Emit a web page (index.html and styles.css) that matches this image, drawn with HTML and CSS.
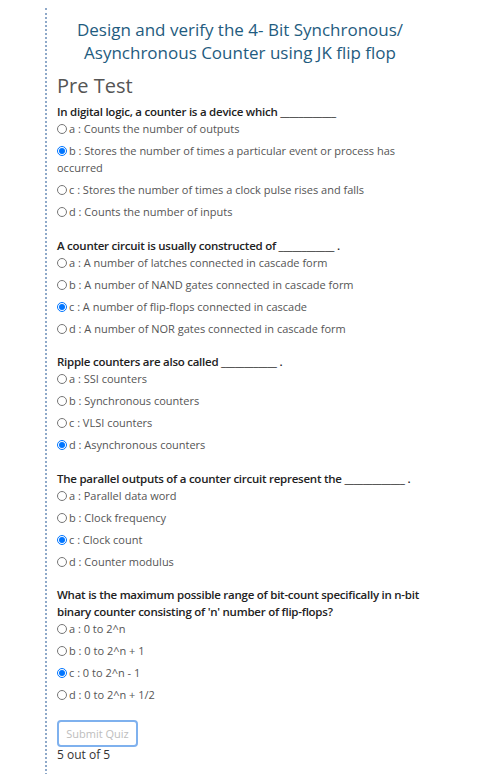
FILE: index.html
```html
<!DOCTYPE html>
<html>
<head>
<meta charset="utf-8">
<link rel="stylesheet" href="styles.css">
</head>
<body>
<div class="page">
  <h1 class="title">Design and verify the 4- Bit Synchronous/<br>Asynchronous Counter using JK flip flop</h1>
  <h2 class="sub">Pre Test</h2>

  <div class="q">
    <div class="qt">In digital logic, a counter is a device which ____________</div>
    <label class="opt"><input type="radio" name="q1">a : Counts the number of outputs</label>
    <label class="opt"><input type="radio" name="q1" checked>b : Stores the number of times a particular event or process has occurred</label>
    <label class="opt"><input type="radio" name="q1">c : Stores the number of times a clock pulse rises and falls</label>
    <label class="opt"><input type="radio" name="q1">d : Counts the number of inputs</label>
  </div>

  <div class="q">
    <div class="qt">A counter circuit is usually constructed of ____________ .</div>
    <label class="opt"><input type="radio" name="q2">a : A number of latches connected in cascade form</label>
    <label class="opt"><input type="radio" name="q2">b : A number of NAND gates connected in cascade form</label>
    <label class="opt"><input type="radio" name="q2" checked>c : A number of flip-flops connected in cascade</label>
    <label class="opt"><input type="radio" name="q2">d : A number of NOR gates connected in cascade form</label>
  </div>

  <div class="q">
    <div class="qt">Ripple counters are also called ____________ .</div>
    <label class="opt"><input type="radio" name="q3">a : SSI counters</label>
    <label class="opt"><input type="radio" name="q3">b : Synchronous counters</label>
    <label class="opt"><input type="radio" name="q3">c : VLSI counters</label>
    <label class="opt"><input type="radio" name="q3" checked>d : Asynchronous counters</label>
  </div>

  <div class="q">
    <div class="qt">The parallel outputs of a counter circuit represent the _____________ .</div>
    <label class="opt"><input type="radio" name="q4">a : Parallel data word</label>
    <label class="opt"><input type="radio" name="q4">b : Clock frequency</label>
    <label class="opt"><input type="radio" name="q4" checked>c : Clock count</label>
    <label class="opt"><input type="radio" name="q4">d : Counter modulus</label>
  </div>

  <div class="q">
    <div class="qt">What is the maximum possible range of bit-count specifically in n-bit binary counter consisting of 'n' number of flip-flops?</div>
    <label class="opt"><input type="radio" name="q5">a : 0 to 2^n</label>
    <label class="opt"><input type="radio" name="q5">b : 0 to 2^n + 1</label>
    <label class="opt"><input type="radio" name="q5" checked>c : 0 to 2^n - 1</label>
    <label class="opt"><input type="radio" name="q5">d : 0 to 2^n + 1/2</label>
  </div>

  <button class="submit" type="button">Submit Quiz</button>
  <div class="score">5 out of 5</div>
</div>
</body>
</html>
```
FILE: styles.css
```css
html, body {
  margin: 0;
  padding: 0;
  background: #fff;
}
body {
  font-family: "Open Sans", "Lato", sans-serif;
  padding: 8px 0 0 45px;
}
.page {
  width: 390px;
  border-left: 2px dotted #8fa9c9;
  padding: 8px 0 12px 10px;
  box-sizing: border-box;
  min-height: 766px;
}
.title {
  margin: 2px 0 0 -12px;
  text-align: center;
  font-size: 17px;
  font-weight: 500;
  line-height: 23px;
  color: #1f5c80;
}
.sub {
  margin: 9px 0 4px 0;
  font-size: 20px;
  font-weight: 400;
  line-height: 26px;
  color: #555;
}
.q {
  margin-bottom: 16.5px;
}
.qt {
  font-size: 11.5px;
  font-weight: 600;
  line-height: 17px;
  color: #222;
  letter-spacing: -0.25px;
}
.opt {
  display: block;
  font-size: 11px;
  line-height: 17px;
  color: #555;
  margin-bottom: 5px;
}
.opt input {
  width: 10px;
  height: 10px;
  margin: 0 2px 0 0;
  vertical-align: -1px;
}
.submit {
  display: block;
  margin: 0;
  width: 81px;
  height: 27px;
  border: 2px solid #7fb1ee;
  border-radius: 4px;
  background: #fff;
  color: #bdbdbd;
  font-family: inherit;
  font-size: 11px;
  padding: 0;
}
.score {
  margin-top: 0;
  font-size: 12px;
  line-height: 16px;
  color: #333;
}
```
